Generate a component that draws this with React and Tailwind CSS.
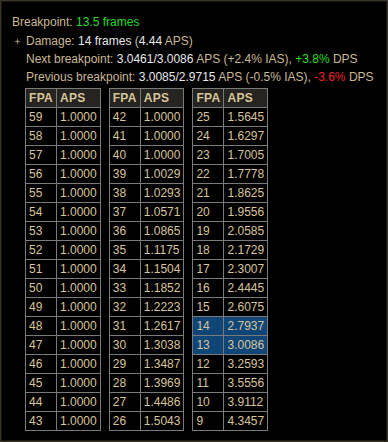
import React from "react";

const t1 = [
  [59, "1.0000"], [58, "1.0000"], [57, "1.0000"], [56, "1.0000"], [55, "1.0000"], [54, "1.0000"], [53, "1.0000"], [52, "1.0000"], [51, "1.0000"], [50, "1.0000"], [49, "1.0000"], [48, "1.0000"], [47, "1.0000"], [46, "1.0000"], [45, "1.0000"], [44, "1.0000"], [43, "1.0000"],
];
const t2 = [
  [42, "1.0000"], [41, "1.0000"], [40, "1.0000"], [39, "1.0029"], [38, "1.0293"], [37, "1.0571"], [36, "1.0865"], [35, "1.1175"], [34, "1.1504"], [33, "1.1852"], [32, "1.2223"], [31, "1.2617"], [30, "1.3038"], [29, "1.3487"], [28, "1.3969"], [27, "1.4486"], [26, "1.5043"],
];
const t3 = [
  [25, "1.5645"], [24, "1.6297"], [23, "1.7005"], [22, "1.7778"], [21, "1.8625"], [20, "1.9556"], [19, "2.0585"], [18, "2.1729"], [17, "2.3007"], [16, "2.4445"], [15, "2.6075"], [14, "2.7937"], [13, "3.0086"], [12, "3.2593"], [11, "3.5556"], [10, "3.9112"], [9, "4.3457"],
];

function Table({ rows, hl = [] }) {
  return (
    <table className="border-collapse w-[75px] text-[12px] leading-[18px]">
      <thead>
        <tr className="bg-[#262420]">
          <th className="border border-[#7a7a7a] h-[19px] w-[27px] px-[3px] text-left font-bold text-[#d8c49a] tracking-[0.3px]">FPA</th>
          <th className="border border-[#7a7a7a] h-[19px] px-[3px] text-left font-bold text-[#d8c49a] tracking-[0.3px]">APS</th>
        </tr>
      </thead>
      <tbody>
        {rows.map(([f, a]) => {
          const h = hl.includes(f);
          return (
            <tr key={f} className={h ? "bg-[#0f4677]" : ""}>
              <td className="border border-[#7a7a7a] h-[19px] px-[3px] text-[#d8c49a]">{f}</td>
              <td className="border border-[#7a7a7a] h-[19px] px-[3px] text-[#d8c49a]">{a}</td>
            </tr>
          );
        })}
      </tbody>
    </table>
  );
}

export default function App() {
  return (
    <div
      className="w-[388px] h-[442px] bg-[#3a3428] p-px"
      style={{ fontFamily: '"Liberation Sans", Arial, sans-serif' }}
    >
      <div className="w-full h-full bg-black border border-[#1a1712] pt-[11px] pl-[10px] text-[12px] leading-[18px] text-[#cbb994]">
        <div>
          Breakpoint: <span className="text-[#22dd22]">13.5 frames</span>
        </div>
        <div className="flex items-center mt-[1px]">
          <svg width="7" height="7" viewBox="0 0 7 7" className="ml-[2px] mr-[5px]">
            <path d="M3.5 0 L4.3 2.7 L7 3.5 L4.3 4.3 L3.5 7 L2.7 4.3 L0 3.5 L2.7 2.7 Z" fill="#8a7f6c" />
          </svg>
          <span>
            Damage: <span className="text-[#e8e8e8]">14 frames</span> (<span className="text-[#e8e8e8]">4.44</span> APS)
          </span>
        </div>
        <div className="pl-[14px]">
          Next breakpoint: <span className="text-[#e8e8e8]">3.0461/3.0086</span> APS (+2.4% IAS), <span className="text-[#22dd22]">+3.8%</span> DPS
        </div>
        <div className="pl-[14px]">
          Previous breakpoint: <span className="text-[#e8e8e8]">3.0085/2.9715</span> APS (-0.5% IAS), <span className="text-[#ee2222]">-3.6%</span> DPS
        </div>
        <div className="flex gap-[8px] pl-[13px] mt-[2px] items-start">
          <Table rows={t1} />
          <Table rows={t2} />
          <Table rows={t3} hl={[14, 13]} />
        </div>
      </div>
    </div>
  );
}
